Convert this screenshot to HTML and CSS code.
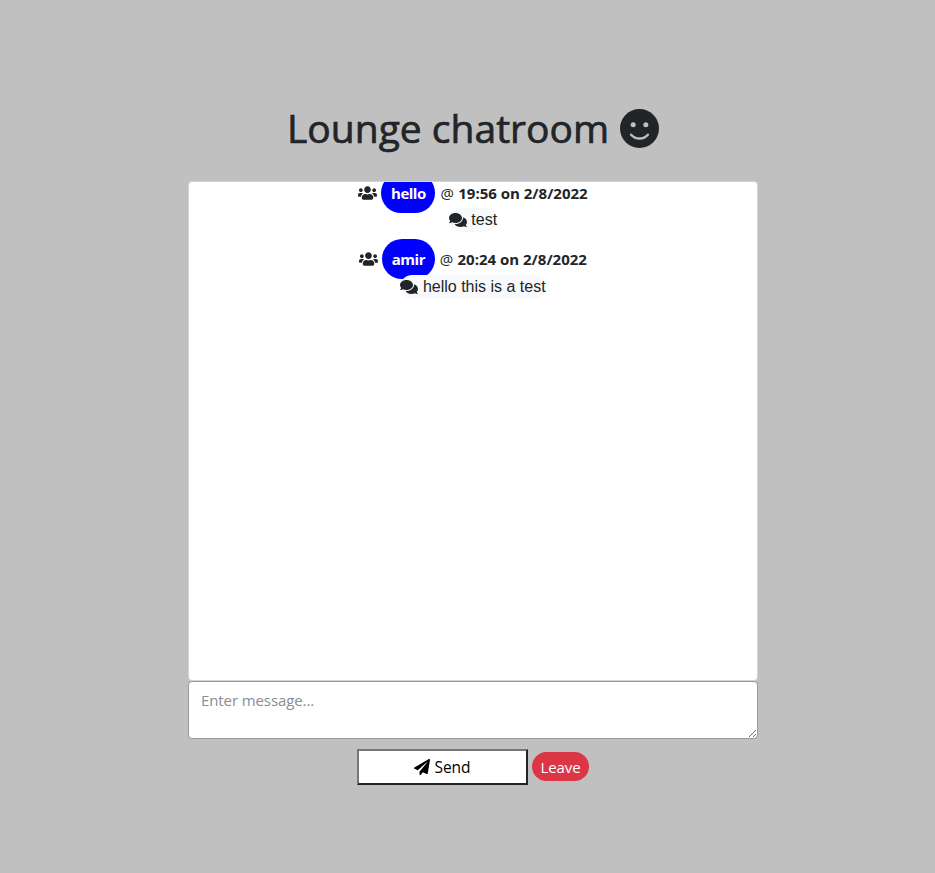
FILE: index.html
```html
<!DOCTYPE html>
<html lang="en">
<head>
<meta charset="utf-8">
<title>Lounge chatroom</title>
<link rel="stylesheet" href="styles.css">
</head>
<body>
<svg class="defs" aria-hidden="true">
  <symbol id="users" viewBox="0 0 640 512"><path d="M96 224c35.3 0 64-28.7 64-64s-28.7-64-64-64-64 28.7-64 64 28.7 64 64 64zm448 0c35.3 0 64-28.7 64-64s-28.7-64-64-64-64 28.7-64 64 28.7 64 64 64zm32 32h-64c-17.6 0-33.5 7.1-45.1 18.6 40.3 22.1 68.9 62 75.1 109.4h66c17.7 0 32-14.3 32-32v-32c0-35.3-28.7-64-64-64zm-256 0c61.9 0 112-50.1 112-112S381.9 32 320 32 208 82.1 208 144s50.1 112 112 112zm76.8 32h-8.3c-20.8 10-43.9 16-68.5 16s-47.6-6-68.5-16h-8.3C179.6 288 128 339.6 128 403.2V432c0 26.5 21.5 48 48 48h288c26.5 0 48-21.5 48-48v-28.8c0-63.6-51.6-115.2-115.2-115.2zm-223.7-13.4C161.5 263.1 145.6 256 128 256H64c-35.3 0-64 28.7-64 64v32c0 17.7 14.3 32 32 32h65.9c6.3-47.4 34.9-87.3 75.2-109.4z"/></symbol>
  <symbol id="comments" viewBox="0 0 576 512"><path d="M416 192c0-88.4-93.1-160-208-160S0 103.6 0 192c0 34.3 14.1 65.9 38 92-13.4 30.2-35.5 54.2-35.8 54.5-2.2 2.3-2.8 5.7-1.5 8.7S4.8 352 8 352c36.6 0 66.9-12.3 88.7-25 32.2 15.7 70.3 25 111.3 25 114.9 0 208-71.6 208-160zm122 220c23.9-26 38-57.7 38-92 0-66.9-53.5-124.2-129.3-148.1.9 6.6 1.3 13.3 1.3 20.1 0 105.9-107.7 192-240 192-10.8 0-21.3-.8-31.7-1.9C207.8 439.6 281.8 480 368 480c41 0 79.1-9.2 111.3-25 21.8 12.7 52.1 25 88.7 25 3.2 0 6.1-1.9 7.3-4.8 1.3-2.9.7-6.3-1.5-8.7-.3-.2-22.4-24.2-35.8-54.5z"/></symbol>
</svg>
<main class="room">
  <h1 class="title"><span class="title-text">Lounge chatroom</span>
    <svg class="smile" viewBox="0 0 512 512"><circle cx="256" cy="256" r="256"/><circle class="eye" cx="173" cy="206" r="33"/><circle class="eye" cx="339" cy="206" r="33"/><path class="mouth" d="M146 338c24 28 62 50 110 50s86-22 110-50"/></svg>
  </h1>
  <section class="log">
    <article class="entry">
      <div class="meta"><svg class="icon"><use href="#users"/></svg><span class="user">hello</span><span class="time"><span class="at">@</span> 19:56 on 2/8/2022</span></div>
      <div class="line"><span class="message"><svg class="icon"><use href="#comments"/></svg>test</span></div>
    </article>
    <article class="entry">
      <div class="meta"><svg class="icon"><use href="#users"/></svg><span class="user">amir</span><span class="time"><span class="at">@</span> 20:24 on 2/8/2022</span></div>
      <div class="line"><span class="message"><svg class="icon"><use href="#comments"/></svg>hello this is a test</span></div>
    </article>
  </section>
  <textarea class="input" placeholder="Enter message..."></textarea>
  <div class="actions">
    <button class="send"><svg class="plane" viewBox="0 0 512 512"><path d="M476 3.2L12.5 270.6c-18.1 10.4-15.8 35.6 2.2 43.2L121 358.4l287.3-253.2c5.5-4.9 13.3 2.6 8.6 8.3L176 407v80.5c0 23.6 28.5 32.9 42.5 15.8L282 426l124.6 52.2c14.2 6 30.4-2.9 33-18.2l72-432C515 7.8 493.3-6.8 476 3.2z"/></svg><span>Send</span></button>
    <button class="leave">Leave</button>
  </div>
</main>
</body>
</html>
```

FILE: styles.css
```css
* { box-sizing: border-box; }
body {
  margin: 0;
  min-height: 873px;
  background: #c0c0c0;
  color: #212529;
  font: 16px/24px "Open Sans", "Noto Sans", sans-serif;
}
.defs { display: none; }
svg { fill: currentColor; flex: none; }
.room { width: 570px; margin-left: 188px; padding-top: 104px; }
.title {
  display: flex;
  justify-content: center;
  align-items: center;
  gap: 11px;
  height: 48px;
  margin: 0 0 29px;
  font-size: 39px;
  line-height: 48px;
  font-weight: 500;
  white-space: nowrap;
}
.title-text { -webkit-text-stroke: 0.7px currentColor; }
.smile { width: 39px; height: 39px; }
.eye { fill: #c0c0c0; }
.mouth { fill: none; stroke: #c0c0c0; stroke-width: 32; stroke-linecap: round; }
.log {
  height: 500px;
  overflow: hidden;
  background: #fff;
  border: 1px solid #ced4da;
  border-radius: 4px;
}
.entry { height: 66px; }
.entry:first-child { margin-top: -1px; }
.meta {
  display: flex;
  justify-content: center;
  align-items: center;
  height: 24px;
  font-size: 15px;
  font-weight: 700;
  white-space: nowrap;
}
.icon { width: 19px; height: 16px; }
.user {
  display: flex;
  align-items: center;
  justify-content: center;
  height: 40px;
  padding: 0 9.7px;
  margin: 0 5px 0 4px;
  border-radius: 20px;
  background: #00f;
  color: #fff;
  letter-spacing: -0.5px;
}
.at { font-weight: 500; margin-right: 0.5px; }
.line { display: flex; justify-content: center; margin-top: 3px; }
.entry + .entry .line { margin-top: 4px; }
.message {
  position: relative;
  display: flex;
  align-items: center;
  gap: 4.5px;
  height: 24px;
  border-radius: 12px;
  background: #f8f9fa;
  font-family: "Liberation Sans", sans-serif;
}
.message .icon { width: 18px; margin-bottom: 1px; }
.input {
  display: block;
  width: 100%;
  height: 58px;
  padding: 6px 12px;
  border: 1px solid #999;
  border-radius: 4px;
  background: #fff;
  font: 15px/24px "Open Sans", sans-serif;
  letter-spacing: -0.1px;
  resize: vertical;
}
.input::placeholder { color: #868e96; }
.actions { display: flex; justify-content: center; align-items: center; gap: 4px; margin-top: 10px; }
.send {
  display: flex;
  align-items: center;
  justify-content: center;
  gap: 4px;
  width: 171px;
  height: 36px;
  padding: 0;
  border: 2px solid;
  border-color: #767676 #212529 #212529 #767676;
  background: #fff;
  color: #000;
  font: 15.5px/24px "Open Sans", sans-serif;
}
.plane { width: 16px; height: 16px; }
.leave {
  width: 57px;
  height: 29px;
  margin-bottom: 2px;
  padding: 2px 0 0;
  border: 0;
  border-radius: 15px;
  background: #dc3545;
  color: #fff;
  font: 15px/24px "Open Sans", sans-serif;
  letter-spacing: -0.1px;
}
```
